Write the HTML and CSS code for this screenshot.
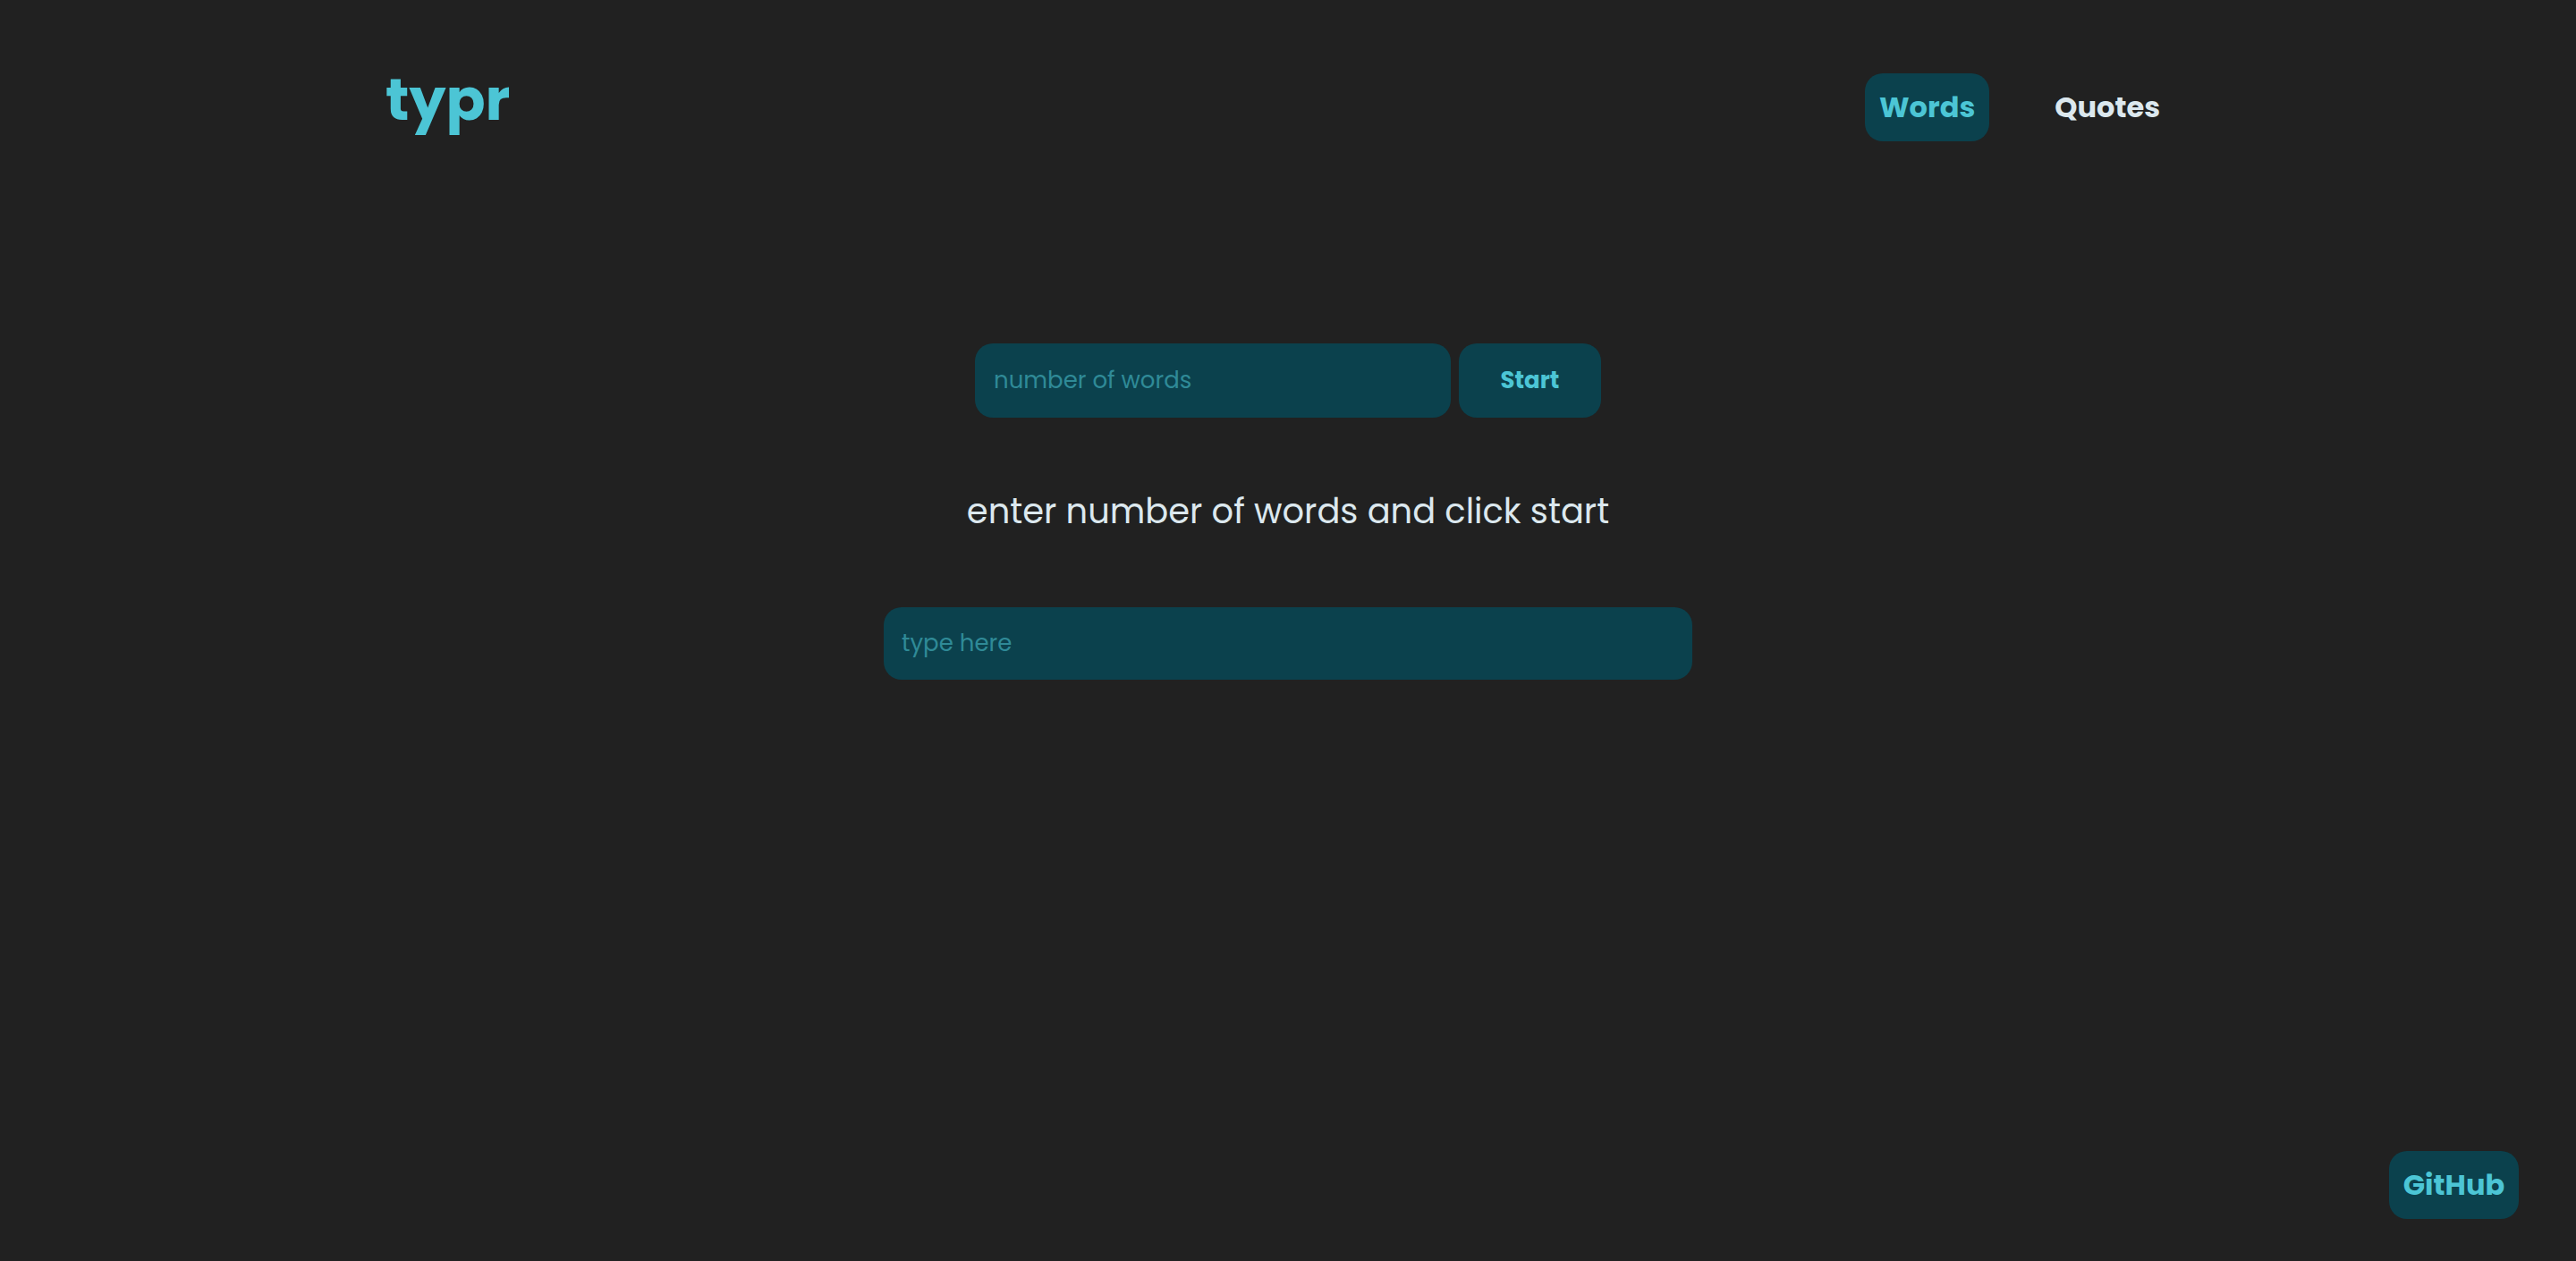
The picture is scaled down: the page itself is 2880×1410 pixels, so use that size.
FILE: index.html
```html
<!DOCTYPE html>
<html lang="en">
<head>
<meta charset="utf-8">
<title>typr</title>
<link rel="stylesheet" href="styles.css">
</head>
<body>
<header class="header">
  <a class="logo" href="#">typr</a>
  <nav class="nav">
    <a class="nav-link active" href="#">Words</a>
    <a class="nav-link" href="#">Quotes</a>
  </nav>
</header>
<main class="main">
  <form class="start-row">
    <input class="count-input" type="text" placeholder="number of words">
    <button class="start-btn" type="button">Start</button>
  </form>
  <p class="prompt">enter number of words and click start</p>
  <input class="type-input" type="text" placeholder="type here">
</main>
<a class="github" href="#">GitHub</a>
</body>
</html>
```

FILE: styles.css
```css
* { box-sizing: border-box; }

html, body {
  margin: 0;
  height: 100%;
}

body {
  background: #212121;
  font-family: "Poppins", "Inter", "Noto Sans", sans-serif;
  color: #dce8ee;
  overflow: hidden;
}

a { text-decoration: none; }

.header {
  display: flex;
  justify-content: space-between;
  align-items: center;
  padding: 82px 449px 0 431px;
}

.logo {
  color: #4cc5d5;
  font-weight: 700;
  font-size: 65px;
  line-height: 76px;
  margin-top: -16px;
}

.nav {
  display: flex;
  gap: 57px;
}

.nav-link {
  display: flex;
  align-items: center;
  justify-content: center;
  height: 76px;
  padding: 0 16px;
  border-radius: 20px;
  font-weight: 700;
  font-size: 32px;
  color: #dce8ee;
}

.nav-link.active {
  background: #0b414d;
  color: #4cc5d5;
}

.main {
  display: flex;
  flex-direction: column;
  align-items: center;
  padding-top: 226px;
}

.start-row {
  display: flex;
  gap: 9px;
  margin: 0;
}

.count-input,
.type-input {
  background: #0b414d;
  border: none;
  outline: none;
  border-radius: 20px;
  font-family: inherit;
  font-size: 26px;
  color: #4cc5d5;
  padding: 0 21px;
}

.count-input::placeholder,
.type-input::placeholder {
  color: #2f8a97;
}

.count-input {
  width: 532px;
  height: 83px;
}

.start-btn {
  width: 159px;
  height: 83px;
  background: #0b414d;
  border: none;
  border-radius: 20px;
  font-family: inherit;
  font-weight: 700;
  font-size: 26px;
  color: #4cc5d5;
}

.prompt {
  margin: 0;
  padding-top: 75px;
  line-height: 60px;
  font-size: 38.4px;
  color: #dce8ee;
}

.type-input {
  margin-top: 77px;
  width: 904px;
  height: 81px;
  padding: 0 20px;
}

.github {
  position: fixed;
  right: 64px;
  bottom: 47px;
  display: flex;
  align-items: center;
  justify-content: center;
  width: 145px;
  height: 76px;
  border-radius: 20px;
  background: #0b414d;
  color: #4cc5d5;
  font-weight: 700;
  font-size: 32px;
}
```
